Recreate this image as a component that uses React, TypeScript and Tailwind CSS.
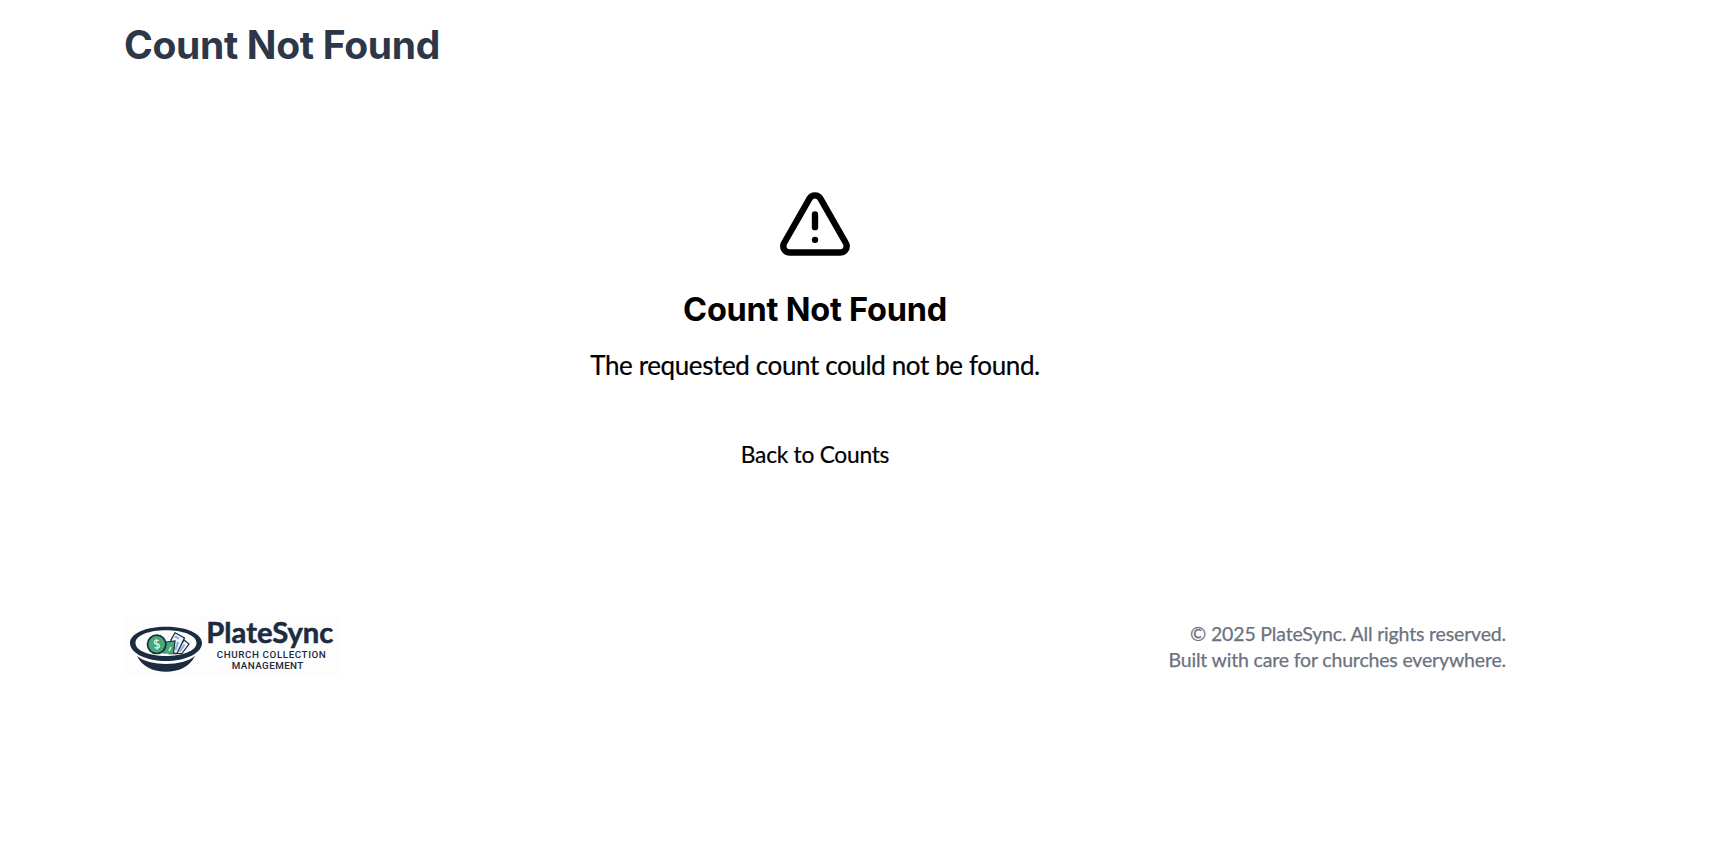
function PlateSyncLogo() {
  return (
    <svg viewBox="0 0 214 62" className="h-[62px] w-[214px]" role="img" aria-label="PlateSync">
      <rect width="214" height="62" fill="#fdfdfd" />
      <path d="M13 41 C25 51.500 59 51.500 71 41 C66 52 54 56.700 42 56.700 C30 56.700 18 52 13 41Z" fill="#1b2b40" />
      <path fillRule="evenodd" d="M42 11.800 C62 11.800 78 18.500 78 28 C78 38.500 61 46 42 46 C23 46 6 38.500 6 28 C6 18.500 22 11.800 42 11.800Z M42 15.300 C26 15.300 11.500 20 11.500 28 C11.500 36 26 41 42 41 C58 41 72.500 36 72.500 28 C72.500 20 58 15.300 42 15.300Z" fill="#1b2b40" />
      <path d="M60 25 L65 29 L58 38.500 L51 38.500Z" fill="#eef4fa" stroke="#1b2b40" strokeWidth="1.200" />
      <path d="M60.500 29.500 L56 36.500" stroke="#8fb2dc" strokeWidth="2" />
      <path d="M51 17.800 L60.500 23 L53 38.500 L45 38.500 L47 25Z" fill="#eef4fa" stroke="#1b2b40" strokeWidth="1.300" />
      <path d="M51 21.500 L55 23.500 M54 27 L51.500 35" fill="none" stroke="#8fb2dc" strokeWidth="2.300" />
      <path d="M40 27 L51 26 L49.500 38.800 L38 38.800Z" fill="#48a878" />
      <path d="M42 27 L51 26 L49.500 38" fill="none" stroke="#1b2b40" strokeWidth="1.200" />
      <path d="M47 32 L45 36" stroke="#d2eadd" strokeWidth="1.500" />
      <circle cx="32.700" cy="29.300" r="9.200" fill="#48a878" stroke="#1b2b40" strokeWidth="1.700" />
      <text x="32.700" y="33.500" textAnchor="middle" className="font-['Lato',sans-serif] text-[12px] font-normal" fill="#fff" transform="rotate(-10 32.700 29.300)">$</text>
      <text x="82.300" y="28.300" textLength="127" lengthAdjust="spacingAndGlyphs" className="font-['Lato',sans-serif] text-[28.500px] font-bold" fill="#1b2b40" stroke="#1b2b40" strokeWidth="0.500">PlateSync</text>
      <text x="92.800" y="42.700" textLength="109" className="font-['Roboto',sans-serif] text-[9.800px] font-medium" fill="#1b2b40">CHURCH COLLECTION</text>
      <text x="107.800" y="53.700" textLength="71.500" className="font-['Roboto',sans-serif] text-[9.800px] font-medium" fill="#1b2b40">MANAGEMENT</text>
    </svg>
  );
}

function AlertTriangle() {
  return (
    <svg viewBox="0 0 24 24" className="size-[76px]" fill="none" stroke="currentColor" strokeWidth="2" strokeLinecap="round" strokeLinejoin="round" aria-hidden="true">
      <path d="m21.730 18-8-14a2 2 0 0 0-3.480 0l-8 14A2 2 0 0 0 4 21h16a2 2 0 0 0 1.730-3" />
      <path d="M12 9v4" />
      <path d="M12 17h.01" />
    </svg>
  );
}

export default function App() {
  return (
    <div className="min-h-screen bg-white font-['Lato',sans-serif] text-black">
      <div className="ml-[124px] w-[1382px]">
        <header className="pt-[20px]">
          <h1 className="font-['Inter',sans-serif] text-[39px] leading-[50px] font-bold tracking-[-0.330px] text-[#2d3748]">Count Not Found</h1>
        </header>
        <main className="flex h-[545px] flex-col items-center pt-[116px]">
          <AlertTriangle />
          <h2 className="mt-[27px] font-['Inter',sans-serif] text-[32.500px] leading-[42px] font-bold tracking-[-0.240px]">Count Not Found</h2>
          <p className="mt-[15px] text-[26px] leading-[39px] tracking-[-0.380px] [-webkit-text-stroke:0.2px]">The requested count could not be found.</p>
          <button className="mt-[44px] h-[52px] px-5 text-[22.750px] leading-[34px] tracking-[-0.260px] [-webkit-text-stroke:0.2px]">Back to Counts</button>
        </main>
        <footer className="flex items-center justify-between">
          <PlateSyncLogo />
          <div className="pt-[2px] text-right text-[19.500px] leading-[26px] tracking-[-0.170px] text-[#6b7280] [-webkit-text-stroke:0.25px]">
            <p>© 2025 PlateSync. All rights reserved.</p>
            <p>Built with care for churches everywhere.</p>
          </div>
        </footer>
      </div>
    </div>
  );
}
